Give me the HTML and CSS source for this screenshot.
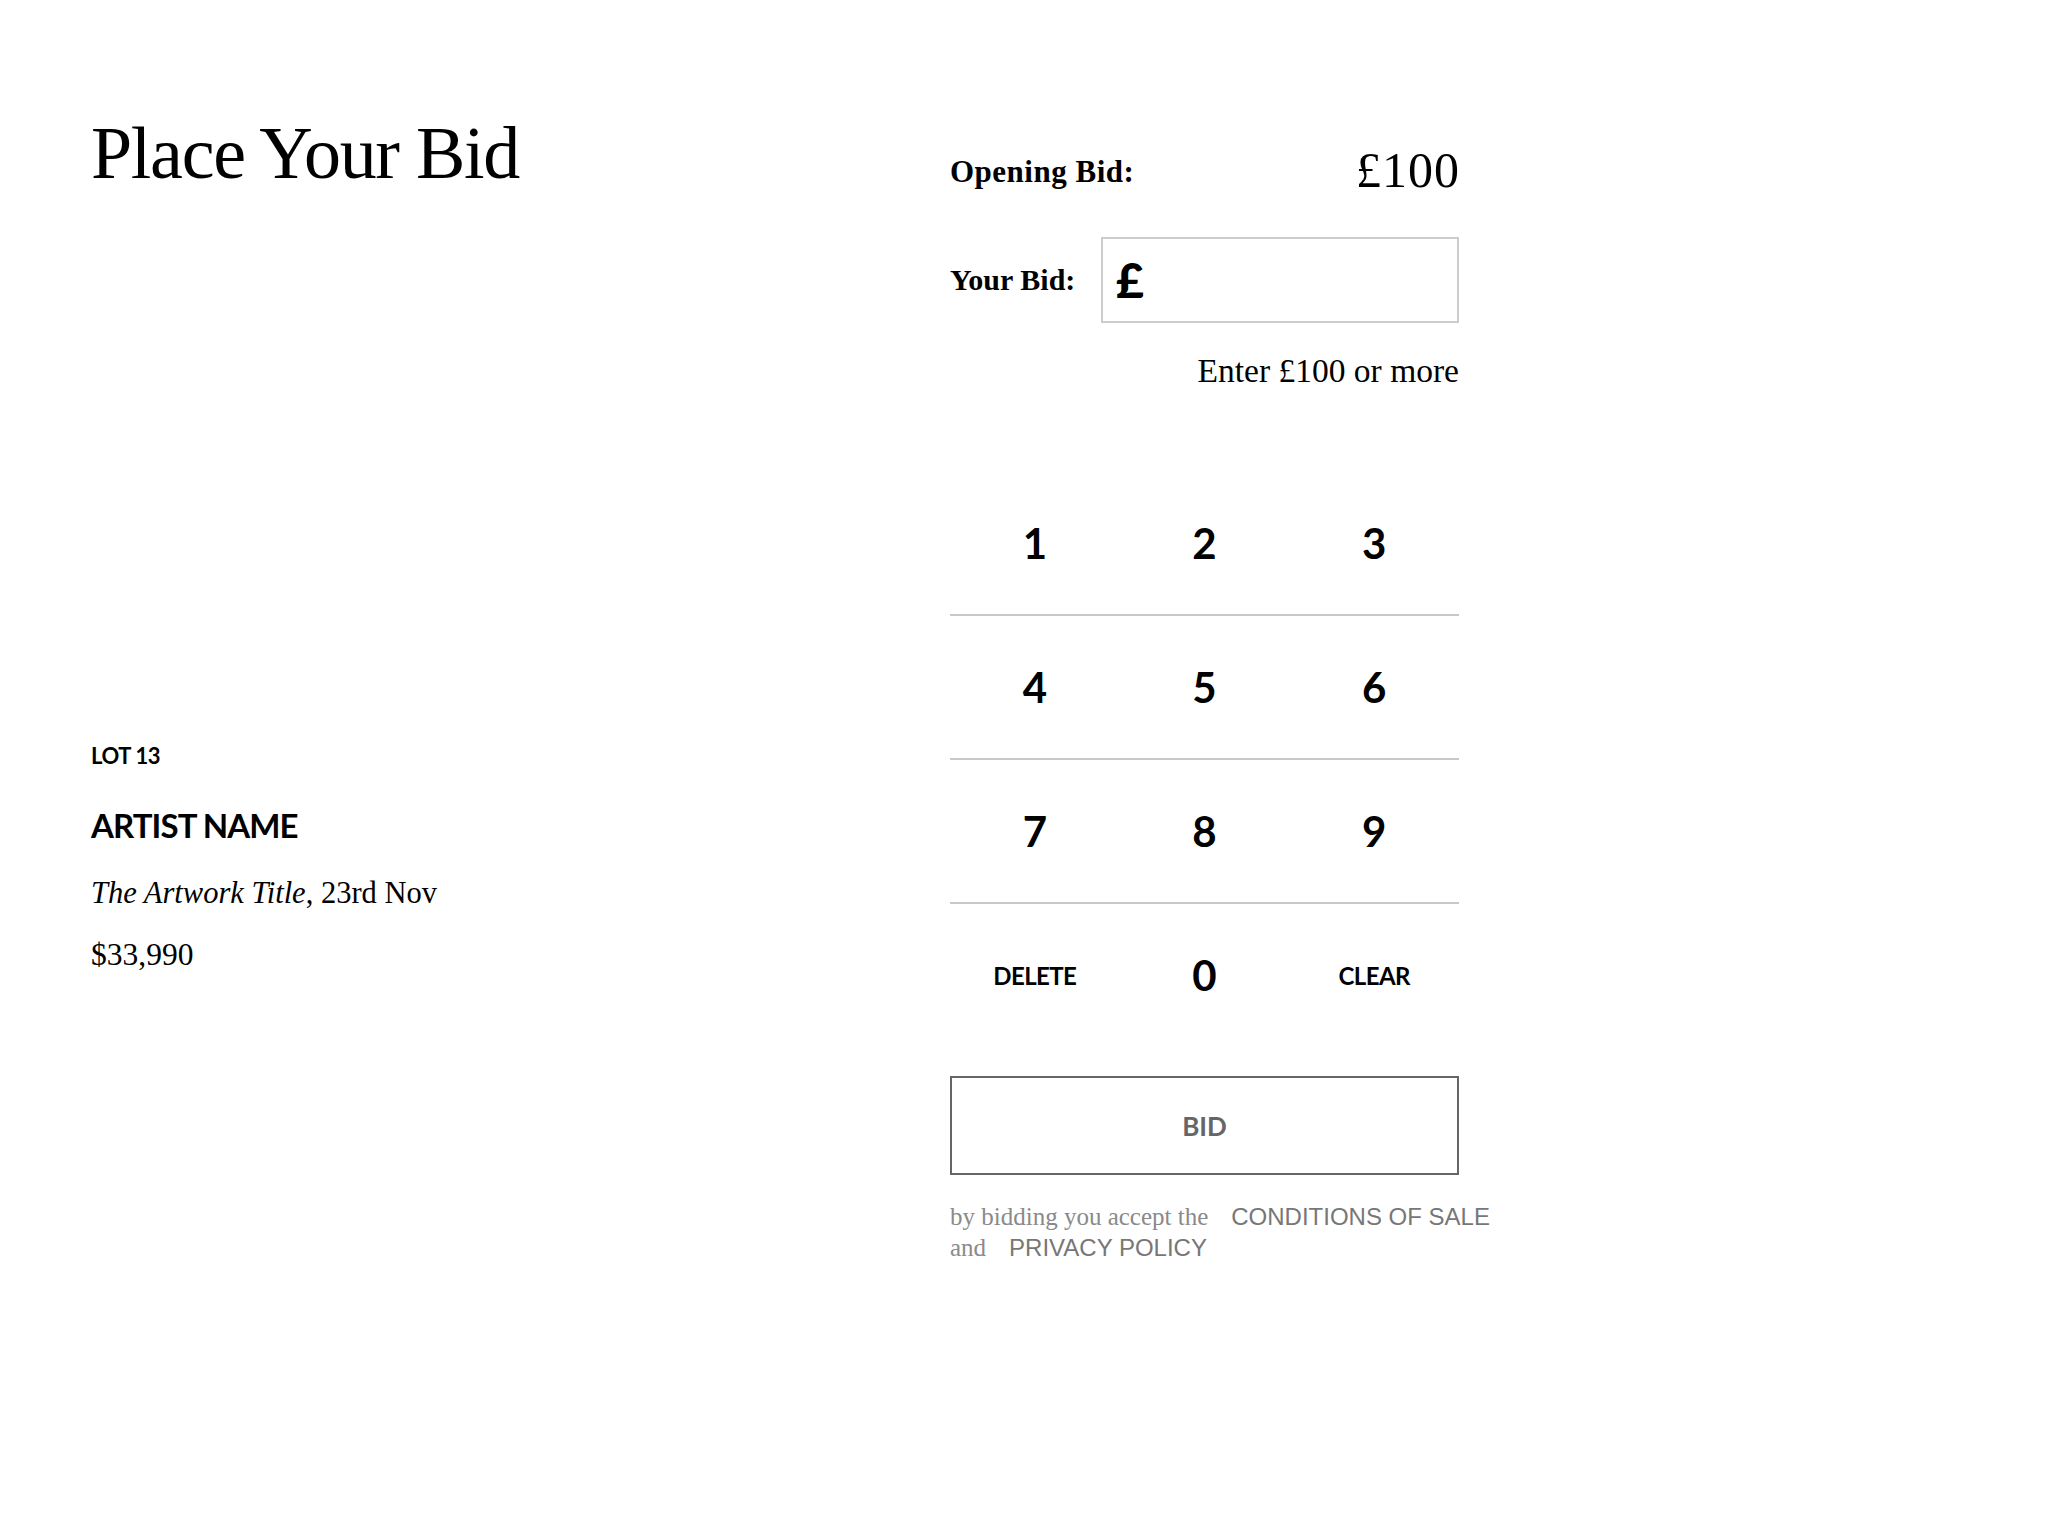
FILE: index.html
```html
<!DOCTYPE html>
<html lang="en">
<head>
<meta charset="utf-8">
<title>Place Your Bid</title>
<link rel="stylesheet" href="styles.css">
</head>
<body>
<div class="page">
  <section class="lot-col">
    <h1 class="title">Place Your Bid</h1>
    <div class="lot">
      <div class="lot-no">LOT 13</div>
      <div class="artist">ARTIST NAME</div>
      <div class="work"><em>The Artwork Title</em>, 23rd Nov</div>
      <div class="price">$33,990</div>
    </div>
  </section>
  <section class="bid-col">
    <div class="opening">
      <span class="label">Opening Bid:</span>
      <span class="opening-value">£100</span>
    </div>
    <div class="your-bid">
      <span class="label short">Your Bid:</span>
      <div class="bid-input"><span class="currency">£</span></div>
    </div>
    <div class="hint">Enter £100 or more</div>
    <div class="keypad">
      <div class="key-row"><span class="key">1</span><span class="key">2</span><span class="key">3</span></div>
      <div class="key-row"><span class="key">4</span><span class="key">5</span><span class="key">6</span></div>
      <div class="key-row"><span class="key">7</span><span class="key">8</span><span class="key">9</span></div>
      <div class="key-row last"><span class="key word">DELETE</span><span class="key">0</span><span class="key word">CLEAR</span></div>
    </div>
    <div class="bid-btn">BID</div>
    <p class="terms">by bidding you accept the<a class="link">CONDITIONS OF SALE</a><br>and<a class="link">PRIVACY POLICY</a></p>
  </section>
</div>
</body>
</html>
```
FILE: styles.css
```css
html, body {
  margin: 0;
  padding: 0;
  background: #fff;
  color: #000;
}
body {
  font-family: "Liberation Serif", "Times New Roman", serif;
}
.page {
  display: flex;
  padding: 120px 0 0 91px;
}
.lot-col {
  flex: 0 0 859px;
  min-width: 0;
  display: flex;
  flex-direction: column;
}
.title {
  margin: -4px 0 0;
  font-weight: 400;
  font-size: 74px;
  line-height: 74px;
  letter-spacing: -1.3px;
}
.lot {
  margin-top: 552px;
}
.lot-no {
  font-family: "Lato", "Liberation Sans", sans-serif;
  font-weight: 700;
  font-size: 22px;
  line-height: 28px;
  letter-spacing: -0.4px;
}
.artist {
  margin-top: 35px;
  font-family: "Lato", "Liberation Sans", sans-serif;
  font-weight: 700;
  font-size: 33px;
  line-height: 40px;
  letter-spacing: -0.9px;
}
.work {
  margin-top: 29px;
  font-size: 30.5px;
  line-height: 38px;
}
.price {
  margin-top: 24px;
  font-size: 31.5px;
  line-height: 38px;
}
.bid-col {
  flex: 0 0 509px;
  width: 509px;
  min-width: 0;
  margin-top: 22px;
  display: flex;
  flex-direction: column;
}
.opening {
  height: 60px;
  display: flex;
  align-items: center;
  justify-content: space-between;
}
.label {
  font-weight: 700;
  font-size: 31px;
  letter-spacing: 0.5px;
}
.label.short {
  font-size: 30px;
  letter-spacing: 0;
}
.opening-value {
  font-size: 50px;
  letter-spacing: 1px;
  margin-right: -1px;
  margin-top: -5px;
}
.your-bid {
  margin-top: 35px;
  display: flex;
  align-items: center;
  justify-content: space-between;
}
.bid-input {
  box-sizing: border-box;
  width: 358px;
  height: 86px;
  border: 2px solid #cccccc;
  display: flex;
  align-items: center;
  padding-left: 13px;
}
.currency {
  font-family: "Lato", "DejaVu Sans", sans-serif;
  font-weight: 900;
  font-size: 48px;
  line-height: 1;
}
.hint {
  margin-top: 28px;
  text-align: right;
  font-size: 33.5px;
  line-height: 40px;
}
.keypad {
  margin-top: 81px;
}
.key-row {
  display: grid;
  grid-template-columns: repeat(3, 1fr);
  height: 142px;
  border-bottom: 2px solid #c8c8c8;
}
.key-row.last {
  border-bottom: none;
}
.key {
  display: flex;
  align-items: center;
  justify-content: center;
  font-family: "Lato", "Liberation Sans", sans-serif;
  font-weight: 700;
  font-size: 42px;
}
.key.word {
  font-size: 24px;
  letter-spacing: -0.6px;
}
.bid-btn {
  margin-top: 30px;
  box-sizing: border-box;
  height: 99px;
  border: 2px solid #666666;
  display: flex;
  align-items: center;
  justify-content: center;
  font-family: "Lato", "Liberation Sans", sans-serif;
  font-weight: 700;
  font-size: 26px;
  color: #666666;
}
.terms {
  margin: 26px 0 0;
  font-size: 25px;
  line-height: 31px;
  color: #8a8a8a;
  white-space: nowrap;
}
.link {
  margin-left: 23px;
  font-family: "Liberation Sans", Arial, sans-serif;
  font-size: 24px;
  color: #777777;
}
```
